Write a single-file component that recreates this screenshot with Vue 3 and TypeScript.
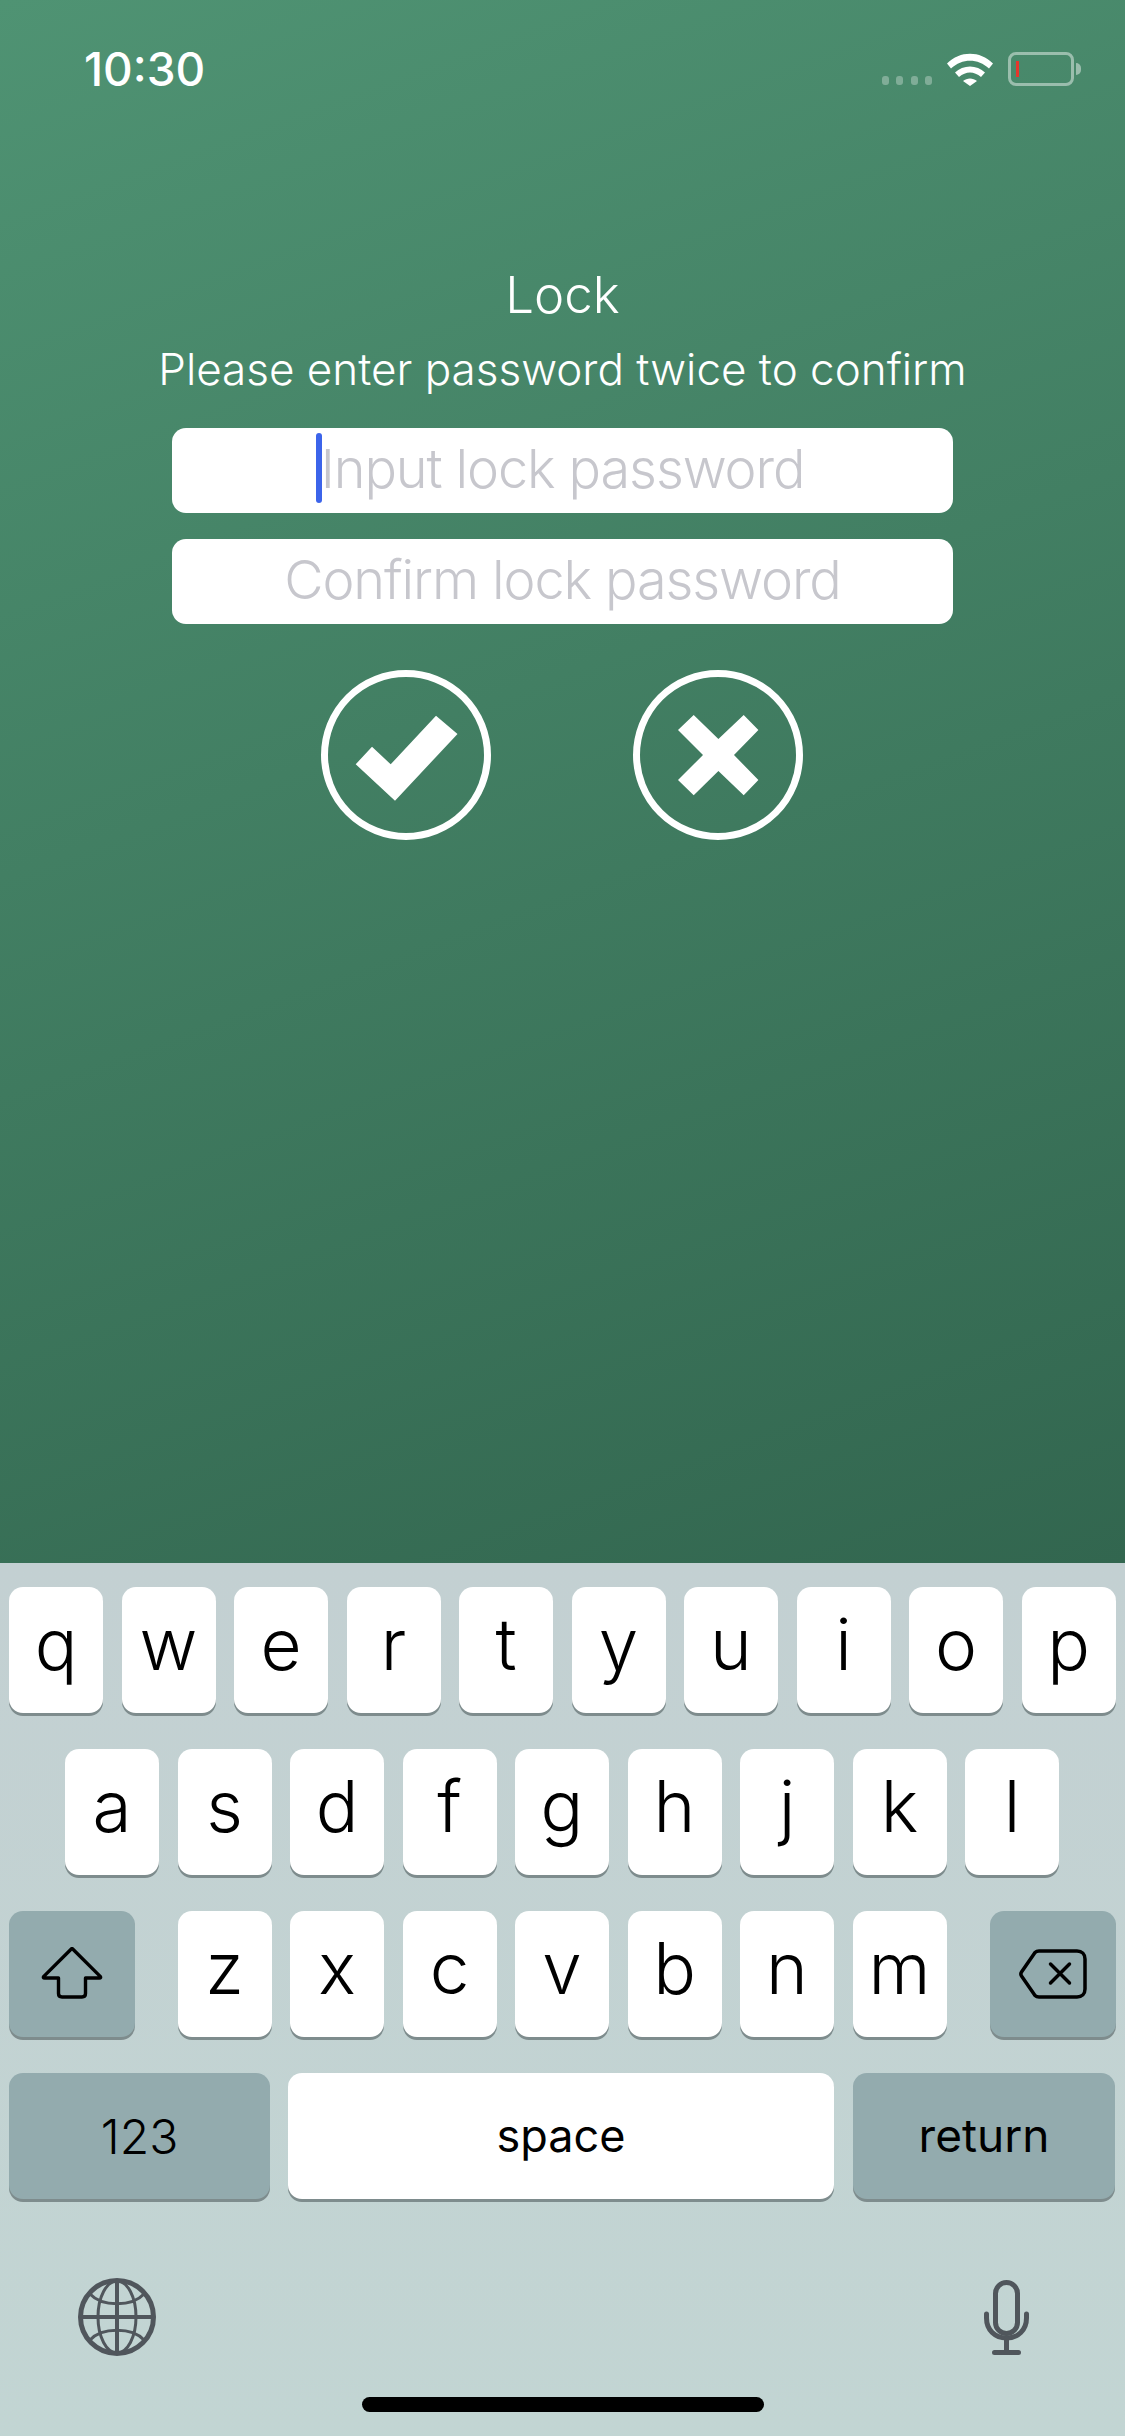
<script setup lang="ts">
const rowOne = ["q", "w", "e", "r", "t", "y", "u", "i", "o", "p"]
const rowTwo = ["a", "s", "d", "f", "g", "h", "j", "k", "l"]
const rowThree = ["z", "x", "c", "v", "b", "n", "m"]
</script>

<template>
  <div class="phone">
    <section class="lock-screen">
      <header class="status-bar">
        <span class="clock">10:30</span>
        <div class="status-icons">
          <div class="signal"><i /><i /><i /><i /></div>
          <svg class="wifi" viewBox="0 0 46 34" width="46" height="34">
            <path d="M0 11.5C13 -1.5 33 -1.5 46 11.5L42 16.5C31 6 15 6 4 16.5Z" fill="#fff" />
            <path d="M8 20.5C16 12.5 30 12.5 38 20.5L34 25C27 19 19 19 12 25Z" fill="#fff" />
            <path d="M16 29C20 25.5 26 25.5 30 29L23 34Z" fill="#fff" />
          </svg>
          <div class="battery"><b /></div>
          <span class="battery-nub" />
        </div>
      </header>

      <h1 class="title">Lock</h1>
      <p class="subtitle">Please enter password twice to confirm</p>

      <div class="field">
        <span class="caret" />
        <span class="placeholder">Input lock password</span>
      </div>
      <div class="field field-second">
        <span class="placeholder">Confirm lock password</span>
      </div>

      <div class="actions">
        <svg viewBox="0 0 170 170" width="170" height="170">
          <circle cx="85" cy="85" r="81.5" fill="none" stroke="#fff" stroke-width="7" />
          <path d="M34.7 94.3L51 76.7L69.7 94.3L115 45.7L136.5 64L74 130.7Z" fill="#fff" />
        </svg>
        <svg viewBox="0 0 170 170" width="170" height="170">
          <circle cx="85" cy="85" r="81.5" fill="none" stroke="#fff" stroke-width="7" />
          <path d="M60.7 45L85.4 69L110.7 45L125.4 60L101 85L125.4 110L110.7 125.3L85.4 101L60.7 125.3L45 110L70 85L45 60Z" fill="#fff" />
        </svg>
      </div>
    </section>

    <section class="keyboard">
      <div class="key-row">
        <button v-for="k in rowOne" :key="k" type="button" class="key">{{ k }}</button>
      </div>
      <div class="key-row row-center">
        <button v-for="k in rowTwo" :key="k" type="button" class="key">{{ k }}</button>
      </div>
      <div class="key-row row-split">
        <button type="button" class="key key-dark key-icon key-shift">
          <svg viewBox="-1 0 64 54" width="64" height="54">
            <path d="M30.3 2L2.8 29.4C2 30.4 2.4 31 3.6 31H17.5V46.5C17.5 48.7 18.8 50 21 50H41C43.2 50 44.5 48.7 44.5 46.5V31H58.4C59.6 31 60 30.4 59.2 29.4L31.7 2C31.2 1.5 30.8 1.5 30.3 2Z" fill="none" stroke="#000" stroke-width="3.4" stroke-linejoin="round" />
          </svg>
        </button>
        <div class="letters">
          <button v-for="k in rowThree" :key="k" type="button" class="key">{{ k }}</button>
        </div>
        <button type="button" class="key key-dark key-icon">
          <svg viewBox="0 0 70 52" width="70" height="52">
            <path d="M21 3H59C64 3 67 6 67 11V41C67 46 64 49 59 49H21C19 49 18 48.5 17 47.5L3.5 28C2.5 26.5 2.5 25.5 3.5 24L17 4.5C18 3.5 19 3 21 3Z" fill="none" stroke="#000" stroke-width="3.5" stroke-linejoin="round" />
            <path d="M32.5 16L51.5 35M51.5 16L32.5 35" fill="none" stroke="#000" stroke-width="3.5" stroke-linecap="round" />
          </svg>
        </button>
      </div>
      <div class="key-row row-bottom">
        <button type="button" class="key key-dark key-label key-num">123</button>
        <button type="button" class="key key-label key-space">space</button>
        <button type="button" class="key key-dark key-label key-return">return</button>
      </div>

      <div class="keyboard-tools">
        <svg viewBox="0 0 78 78" width="78" height="78">
          <g fill="none" stroke="#50565c">
            <circle cx="39" cy="39" r="36.5" stroke-width="5" />
            <path d="M3 39H75M39 3V75" stroke-width="4" />
            <ellipse cx="39" cy="39" rx="19" ry="36" stroke-width="3" />
            <path d="M12 16C24 29 54 29 66 16M12 62C24 49 54 49 66 62" stroke-width="3" />
          </g>
        </svg>
        <svg class="mic" viewBox="0 0 46 76" width="46" height="76">
          <g fill="none" stroke="#50565c" stroke-width="5" stroke-linecap="round">
            <rect x="12.5" y="2.5" width="22" height="51" rx="11" />
            <path d="M3.5 34V38C3.5 50 12 58 23.5 58C35 58 43.5 50 43.5 38V34" />
            <path d="M23.5 58V72.5M11.5 72.5H35.5" />
          </g>
        </svg>
      </div>
      <span class="home-indicator" />
    </section>
  </div>
</template>

<style>
html,
body {
  margin: 0;
  background: #c2d3d2;
}
</style>

<style scoped>
.phone {
  display: flex;
  flex-direction: column;
  width: 1125px;
  height: 2436px;
  overflow: hidden;
  font-family: Inter, "Liberation Sans", sans-serif;
}

.lock-screen {
  display: flex;
  flex-direction: column;
  align-items: center;
  height: 1563px;
  background: linear-gradient(160deg, #4f9373 0%, #32664f 100%);
  color: #fff;
}

.status-bar {
  display: flex;
  align-items: flex-start;
  justify-content: space-between;
  box-sizing: border-box;
  width: 100%;
  height: 263px;
  padding: 52px 44px 0 84px;
}

.clock {
  font-size: 46px;
  font-weight: 500;
  line-height: 34px;
}

.status-icons {
  display: flex;
  align-items: flex-start;
}

.signal {
  display: flex;
  gap: 7.5px;
  margin: 24px 15px 0 0;
}

.signal i {
  width: 7px;
  height: 9px;
  border-radius: 3px;
  background: rgba(255, 255, 255, 0.3);
}

.battery {
  box-sizing: border-box;
  width: 66px;
  height: 34px;
  margin-left: 15px;
  padding: 6px 5px;
  border: 3px solid rgba(255, 255, 255, 0.45);
  border-radius: 8px;
}

.battery b {
  display: block;
  width: 3px;
  height: 100%;
  background: #e5372c;
}

.battery-nub {
  width: 5px;
  height: 12px;
  margin: 11px 0 0 2px;
  border-radius: 0 6px 6px 0;
  background: rgba(255, 255, 255, 0.45);
}

.title {
  margin: 0;
  font-size: 51px;
  font-weight: 350;
  line-height: 64px;
}

.subtitle {
  margin: 15px 0 0;
  font-size: 44px;
  font-weight: 350;
  line-height: 54px;
}

.field {
  position: relative;
  display: flex;
  align-items: center;
  justify-content: center;
  box-sizing: border-box;
  width: 781px;
  height: 85px;
  margin-top: 32px;
  padding-bottom: 5px;
  border-radius: 14px;
  background: #fff;
}

.field-second {
  margin-top: 26px;
}

.placeholder {
  font-size: 54px;
  font-weight: 350;
  letter-spacing: -1.1px;
  color: #c7c7cd;
}

.caret {
  position: absolute;
  top: 5px;
  left: 144px;
  width: 6px;
  height: 70px;
  border-radius: 3px;
  background: #3c64ea;
}

.actions {
  display: flex;
  gap: 142px;
  margin-top: 46px;
  padding-right: 2px;
}

.keyboard {
  position: relative;
  display: flex;
  flex: 1;
  flex-direction: column;
  gap: 36px;
  padding: 24px 9px 0;
  background: linear-gradient(180deg, #c3d0d2 0%, #c2d5d3 100%);
}

.key-row {
  display: flex;
  gap: 18.5px;
}

.row-center {
  justify-content: center;
  padding-right: 1px;
}

.row-split {
  justify-content: space-between;
  gap: 0;
}

.letters {
  display: flex;
  gap: 18.5px;
  margin-right: 1px;
}

.key {
  display: flex;
  align-items: center;
  justify-content: center;
  flex: none;
  width: 94px;
  height: 126px;
  padding: 0 0 12px;
  border: 0;
  border-radius: 14px;
  background: #fff;
  box-shadow: 0 3px 0 #7e8c8d;
  color: #000;
  font-family: inherit;
  font-size: 71px;
  font-weight: 330;
  line-height: 1;
}

.key-dark {
  background: #93abae;
}

.key-icon {
  width: 126px;
  padding: 0 0 1px;
}

.key-shift {
  padding: 0;
}

.row-bottom {
  gap: 18px;
}

.key-label {
  padding: 0 0 2px;
  font-size: 45px;
  font-weight: 400;
}

.key-num {
  width: 261px;
  padding: 2px 0 0;
  font-size: 48px;
  font-weight: 350;
}

.key-space {
  width: 546px;
  margin-right: 1px;
}

.key-return {
  width: 262px;
  font-size: 46px;
}

.keyboard-tools {
  display: flex;
  align-items: flex-start;
  justify-content: space-between;
  margin-top: 43px;
  padding: 0 87px 0 69px;
}

.mic {
  margin-top: 2px;
}

.home-indicator {
  position: absolute;
  bottom: 24px;
  left: 362px;
  width: 402px;
  height: 15px;
  border-radius: 8px;
  background: #000;
}
</style>
